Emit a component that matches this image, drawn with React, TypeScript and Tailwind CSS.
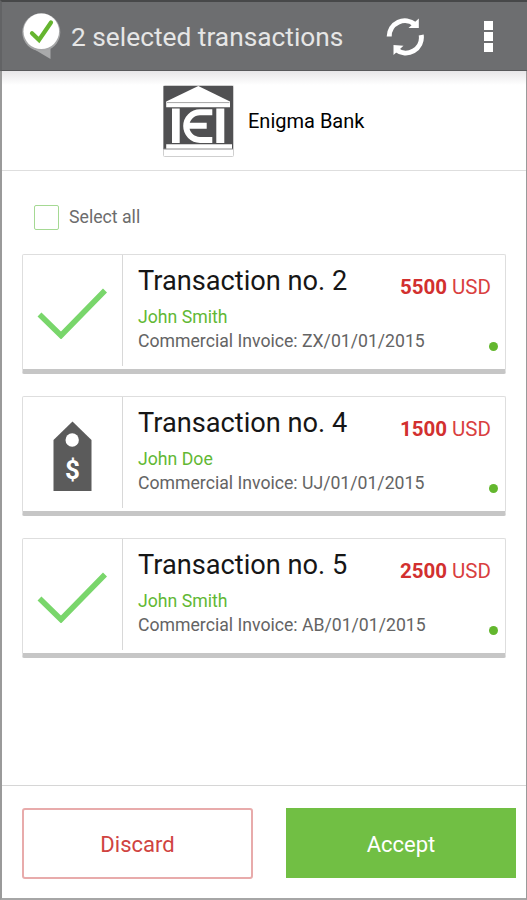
type Transaction = {
  no: number;
  person: string;
  invoice: string;
  amount: number;
  checked: boolean;
};

const transactions: Transaction[] = [
  { no: 2, person: "John Smith", invoice: "ZX/01/01/2015", amount: 5500, checked: true },
  { no: 4, person: "John Doe", invoice: "UJ/01/01/2015", amount: 1500, checked: false },
  { no: 5, person: "John Smith", invoice: "AB/01/01/2015", amount: 2500, checked: true },
];

function AppLogo() {
  return (
    <svg width="42" height="50" viewBox="0 0 42 50" className="-mt-px block shrink-0">
      <path d="M12 37 30.5 48V32Z" fill="#a9aaab" />
      <circle cx="21.3" cy="21.3" r="19" fill="#a6a7a8" />
      <circle cx="21.3" cy="20.3" r="17.8" fill="#fff" />
      <path d="M12 22.3 19 29 31 11.5" fill="none" stroke="#65b52f" strokeWidth="4.2" strokeLinecap="round" />
    </svg>
  );
}

function RefreshIcon() {
  return (
    <svg width="38" height="40" viewBox="0 0 38 40" className="block shrink-0">
      <g fill="none" stroke="#fff" strokeWidth="5">
        <path d="M3.2 20.5A15.6 15.6 0 0 1 29 8.5" />
        <path d="M35.2 19A15.6 15.6 0 0 1 10 33.5" />
      </g>
      <path d="M32.8 2.5V12H22.5Z" fill="#fff" />
      <path d="M7.5 39V29L17.5 29.8Z" fill="#fff" />
    </svg>
  );
}

function BankLogo() {
  return (
    <svg width="72" height="72" viewBox="0 0 72 72" className="block shrink-0">
      <rect x="0.5" y="0.5" width="70" height="71" rx="1" fill="#fff" stroke="#cfcfcf" />
      <path d="M.5 1H70V64H.5Z" fill="#505052" />
      <path d="M3.2 16.5 35.3 1 67 16.5V22.3H3.2Z" fill="#fff" />
      <path d="M4 17.6H66.5" stroke="#a5a5a5" strokeWidth="1" />
      <path d="M9 23.4H16.7V58H9ZM53.3 23.4H61.3V58H53.3Z" fill="#fff" />
      <path d="M49.3 27.3H37A13.8 13.8 0 0 0 37 54.9H49.3M22.5 40.8H43.7" fill="none" stroke="#fff" strokeWidth="6" />
      <path d="M3.2 59.2H69V64H3.2Z" fill="#fff" />
      <path d="M.5 64H70" stroke="#8a8a8b" />
    </svg>
  );
}

function CheckMark() {
  return (
    <svg width="70" height="52" viewBox="0 0 70 52" className="mt-[5px] mr-px block">
      <path d="M2.5 27.5 24 48.5 68 3.5" fill="none" stroke="#79d66b" strokeWidth="5.6" />
    </svg>
  );
}

function PriceTag() {
  return (
    <div className="relative mt-[7px] h-[71px] w-[39px]">
      <svg width="39" height="71" viewBox="0 0 39 71" className="block">
        <path d="M19.5 .5 38.5 19V70H.5V19Z" fill="#5b5b5b" />
        <circle cx="19.2" cy="19" r="6.7" fill="#fff" />
      </svg>
      <span className="absolute inset-x-0 top-[35px] text-center text-[26px] leading-[28px] font-bold text-white">$</span>
    </div>
  );
}

function Card({ t }: { t: Transaction }) {
  return (
    <div className="flex h-[120px] rounded-[2px] border border-b-[5px] border-[#dedede] border-b-[#c6c6c6]">
      <div className="flex h-[111px] w-[100px] shrink-0 items-center justify-center border-r border-[#d8d8d8]">
        {t.checked ? <CheckMark /> : <PriceTag />}
      </div>
      <div className="flex min-w-0 flex-1 flex-col pl-[15px] whitespace-nowrap">
        <h2 className="mt-[10px] text-[27.2px] leading-8 text-[#161616]">Transaction no. {t.no}</h2>
        <p className="mt-[8px] text-[17.7px] leading-6 text-[#62b834]">{t.person}</p>
        <p className="text-[17.65px] leading-6 text-[#646464]">Commercial Invoice: {t.invoice}</p>
      </div>
      <div className="flex shrink-0 flex-col items-end justify-between pt-5 pb-[18px]">
        <p className="pr-[14px] text-[20.5px] leading-6 text-[#d9403f]">
          <b className="font-bold text-[#d2302f]">{t.amount}</b> USD
        </p>
        <span className="mr-[7px] size-[9px] rounded-full bg-[#63b72e]" />
      </div>
    </div>
  );
}

export default function App() {
  return (
    <div className="flex h-[900px] w-[527px] flex-col border-r border-b-2 border-l-2 border-r-[#9a9a9a] border-b-[#a6a6a6] border-l-[#9a9a9a] bg-white font-['Roboto',sans-serif]">
      <header className="-mr-px -ml-[2px] flex h-[71px] shrink-0 items-center border-t-2 border-b border-l-2 border-t-[#474849] border-b-[#58595b] border-l-[#626365] bg-[#6d6e70] pl-[18px]">
        <AppLogo />
        <h1 className="ml-[9px] w-[315px] pt-[2px] text-[26.3px] leading-8 whitespace-nowrap text-[#e6e6e6]">2 selected transactions</h1>
        <RefreshIcon />
        <div className="ml-[60px] flex flex-col gap-[2px] pt-px">
          <i className="size-[9px] bg-white" />
          <i className="size-[9px] bg-white" />
          <i className="size-[9px] bg-white" />
        </div>
      </header>
      <section className="flex h-[100px] shrink-0 border-b border-[#dedede] bg-linear-to-b from-[#e7e6e8] to-white to-[14px] pt-[14px] pl-[161px]">
        <BankLogo />
        <span className="ml-[13px] pt-[24px] text-[20px] leading-6 text-black">Enigma Bank</span>
      </section>
      <main className="flex flex-1 flex-col pr-[20px] pl-[20px]">
        <label className="mt-[33px] ml-3 flex h-[26px] items-center">
          <span className="size-[25px] rounded-[2px] border border-[#a5d993]" />
          <span className="ml-[10px] text-[17.7px] leading-6 text-[#6c6c6c]">Select all</span>
        </label>
        <div className="mt-[24px] flex flex-col gap-[22px]">
          {transactions.map((t) => (
            <Card key={t.no} t={t} />
          ))}
        </div>
      </main>
      <footer className="flex h-[113px] shrink-0 gap-[33px] border-t border-[#d6d6d6] pt-[22px] pr-[9px] pl-[20px]">
        <button className="h-[71px] w-[231px] rounded-[3px] border-2 border-[#e8abab] pt-[2px] text-[22px] text-[#d04341]">Discard</button>
        <button className="h-[70px] w-[230px] bg-[#71bf44] pt-[3px] text-[22px] text-white">Accept</button>
      </footer>
    </div>
  );
}
